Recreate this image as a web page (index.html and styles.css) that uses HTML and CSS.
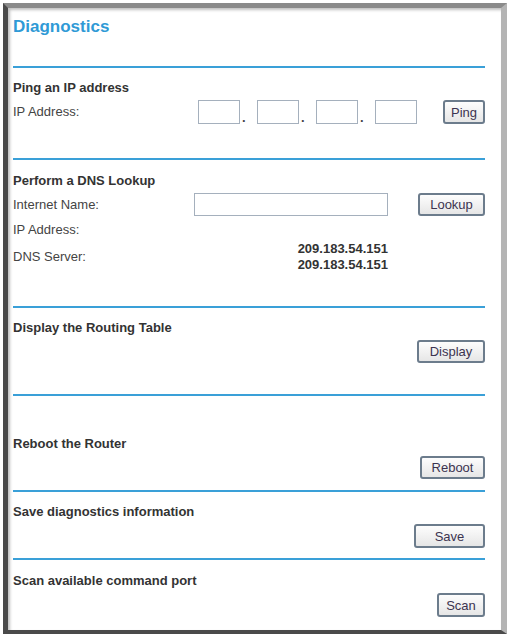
FILE: index.html
```html
<!DOCTYPE html>
<html>
<head>
<meta charset="utf-8">
<title>Diagnostics</title>
<link rel="stylesheet" href="styles.css">
</head>
<body>
<div class="frame">
  <div class="content">
    <h1 class="title">Diagnostics</h1>

    <section class="sec sec-ping">
      <div class="sec-title">Ping an IP address</div>
      <div class="row ip-row">
        <span class="label">IP Address:</span>
        <div class="ip-fields">
          <input class="ip-box" type="text"><span class="dot">.</span>
          <input class="ip-box" type="text"><span class="dot">.</span>
          <input class="ip-box" type="text"><span class="dot">.</span>
          <input class="ip-box" type="text">
        </div>
        <button class="btn btn-ping">Ping</button>
      </div>
    </section>

    <section class="sec sec-dns">
      <div class="sec-title">Perform a DNS Lookup</div>
      <div class="row name-row">
        <span class="label">Internet Name:</span>
        <input class="name-box" type="text">
        <button class="btn btn-lookup">Lookup</button>
      </div>
      <div class="row plain-row">
        <span class="label">IP Address:</span>
      </div>
      <div class="row dns-row">
        <span class="label">DNS Server:</span>
        <div class="dns-values">
          <div>209.183.54.151</div>
          <div>209.183.54.151</div>
        </div>
      </div>
    </section>

    <section class="sec sec-display">
      <div class="sec-title">Display the Routing Table</div>
      <div class="btn-row"><button class="btn btn-display">Display</button></div>
    </section>

    <section class="sec sec-reboot">
      <div class="sec-title">Reboot the Router</div>
      <div class="btn-row"><button class="btn btn-reboot">Reboot</button></div>
    </section>

    <section class="sec sec-save">
      <div class="sec-title">Save diagnostics information</div>
      <div class="btn-row"><button class="btn btn-save">Save</button></div>
    </section>

    <section class="sec sec-scan">
      <div class="sec-title">Scan available command port</div>
      <div class="btn-row"><button class="btn btn-scan">Scan</button></div>
    </section>
  </div>
</div>
</body>
</html>
```

FILE: styles.css
```css
html, body {
  margin: 0;
  padding: 0;
  background: #ffffff;
}

body {
  font-family: "Liberation Sans", Arial, sans-serif;
  color: #333333;
  font-size: 13px;
}

.frame {
  box-sizing: border-box;
  margin: 3px 0 0 3px;
  width: 504px;
  height: 631px;
  border-left: 5px solid #4a4a4a;
  border-top: 5px solid #8a8a8a;
  border-right: 6px solid #b4b4b4;
  border-bottom: 4px solid #4a4a4a;
  box-shadow: inset 2px 2px 3px rgba(0, 0, 0, 0.25);
  background: #ffffff;
}

.content {
  padding: 0 16px 0 5px;
}

.title {
  margin: 0;
  padding-top: 9px;
  height: 49px;
  font-size: 17px;
  line-height: 20px;
  font-weight: bold;
  color: #2f9ad6;
}

.sec {
  box-sizing: border-box;
  border-top: 2px solid #3aa0d8;
}

.sec-ping { height: 92px; padding-top: 12px; }
.sec-dns { height: 148px; padding-top: 13px; }
.sec-display { height: 88px; padding-top: 12px; }
.sec-reboot { height: 96px; padding-top: 40px; }
.sec-save { height: 68px; padding-top: 12px; }
.sec-scan { padding-top: 13px; }

.sec-title {
  font-weight: bold;
  font-size: 13px;
  line-height: 16px;
  color: #333333;
}

.row {
  display: flex;
  align-items: center;
}

.label {
  width: 181px;
  flex: none;
  line-height: 16px;
  color: #444444;
}

.ip-row {
  margin-top: 4px;
  height: 24px;
}

.ip-fields {
  display: flex;
  align-items: flex-end;
  margin-left: 4px;
}

.ip-box {
  box-sizing: border-box;
  width: 42px;
  height: 24px;
  border: 1px solid #a5b0bd;
  margin: 0;
  padding: 0;
  background: #ffffff;
}

.dot {
  box-sizing: border-box;
  width: 17px;
  padding-left: 2px;
  text-align: left;
  line-height: 12px;
  font-size: 13px;
  font-weight: bold;
  color: #444;
}

.btn {
  box-sizing: border-box;
  height: 24px;
  margin: 0;
  padding: 0;
  border: 2px solid #6c7c8c;
  border-radius: 3px;
  background: linear-gradient(#fdfdfd, #e6e6e6);
  font-family: "Liberation Sans", Arial, sans-serif;
  font-size: 13px;
  color: #3c3450;
}

.btn-ping { width: 42px; margin-left: auto; }
.btn-lookup { width: 67px; margin-left: auto; height: 23px; }
.btn-display { width: 68px; height: 23px; }
.btn-reboot { width: 65px; height: 23px; }
.btn-save { width: 71px; height: 24px; }
.btn-scan { width: 48px; height: 24px; }

.name-row {
  margin-top: 4px;
  height: 23px;
}

.name-box {
  box-sizing: border-box;
  width: 194px;
  height: 23px;
  margin: 0;
  padding: 0;
  border: 1px solid #a5b0bd;
  background: #ffffff;
}

.plain-row {
  margin-top: 6px;
}

.dns-row {
  margin-top: 3px;
}

.dns-values {
  width: 194px;
  text-align: right;
  font-weight: bold;
  line-height: 16px;
  color: #333333;
}

.btn-row {
  display: flex;
  justify-content: flex-end;
  margin-top: 4px;
}
```
